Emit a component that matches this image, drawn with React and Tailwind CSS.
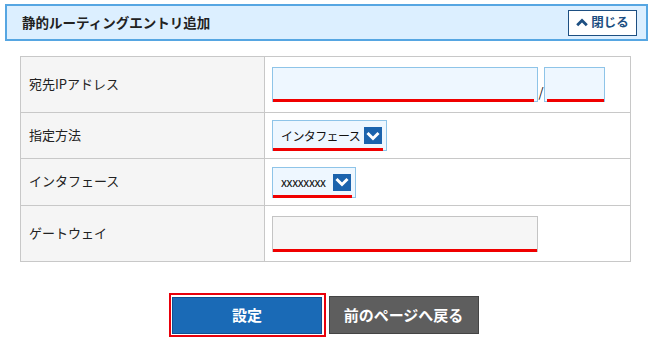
import React from "react";

const font = { fontFamily: '"Noto Sans CJK JP", "Noto Sans", sans-serif' };

function DropIcon() {
  return (
    <span className="flex h-[17px] w-[18px] shrink-0 items-center justify-center bg-[#1b63ad]">
      <svg width="14" height="10" viewBox="0 0 14 10">
        <path d="M1.5 2 L7 7.5 L12.5 2" fill="none" stroke="#fff" strokeWidth="3" strokeLinejoin="miter" />
      </svg>
    </span>
  );
}

function Select({ label, w, track }) {
  return (
    <div className={`relative flex h-[31px] ${w} items-center justify-between border border-[#8ec4e8] bg-[#eef7ff] pl-[8px] pr-[4px]`}>
      <span className={`whitespace-nowrap text-[12px] leading-none text-[#111] ${track}`}>{label}</span>
      <DropIcon />
      <span className="absolute bottom-[-1px] left-0 right-[3px] h-[3px] bg-[#f00000]" />
    </div>
  );
}

function Row({ label, children, h, last }) {
  return (
    <div className={`flex ${h} ${last ? "" : "border-b border-[#c8c8c8]"}`}>
      <div className="flex w-[244px] shrink-0 items-center border-r border-[#c8c8c8] bg-[#f5f5f5] pb-[2px] pl-[8px] text-[13px] text-[#222]">
        {label}
      </div>
      <div className="flex flex-1 items-center bg-white pl-[7px]">{children}</div>
    </div>
  );
}

export default function App() {
  return (
    <div className="h-[348px] w-[652px] bg-white" style={font}>
      <div className="pl-[5px] pr-[4px] pt-[4px]">
        <div className="flex h-[37px] items-center justify-between border-2 border-[#56a6e2] bg-[#dcefff] pl-[15px] pr-[9px]">
          <span className="text-[13.5px] font-bold text-[#222]">静的ルーティングエントリ追加</span>
          <button className="flex h-[26px] w-[69px] items-center justify-center gap-[3px] border-[1.5px] border-[#1d4f82] bg-white text-[12.5px] font-bold text-[#1d4f82]">
            <svg width="12" height="9" viewBox="0 0 12 9">
              <path d="M1.2 7.3 L6 2.5 L10.8 7.3" fill="none" stroke="#1d4f82" strokeWidth="2.8" />
            </svg>
            閉じる
          </button>
        </div>
      </div>

      <div className="ml-[20px] mt-[15px] w-[611px] border border-[#c8c8c8]">
        <Row label="宛先IPアドレス" h="h-[56px]">
          <div className="flex items-end">
            <div className="relative h-[35px] w-[266px] border border-[#8ec4e8] bg-[#eef7ff]">
              <span className="absolute bottom-[-1px] left-0 right-[3px] h-[3px] bg-[#f00000]" />
            </div>
            <span className="mb-[4px] flex w-[6px] justify-center text-[13px] leading-none text-[#111]">/</span>
            <div className="relative h-[35px] w-[61px] border border-[#8ec4e8] bg-[#eef7ff]">
              <span className="absolute bottom-[-1px] left-[2px] right-0 h-[3px] bg-[#f00000]" />
            </div>
          </div>
        </Row>
        <Row label="指定方法" h="h-[46px]">
          <Select label="インタフェース" w="w-[115px]" track="tracking-[-0.6px]" />
        </Row>
        <Row label="インタフェース" h="h-[47px]">
          <Select label="xxxxxxxx" w="w-[84px]" track="tracking-[-0.4px]" />
        </Row>
        <Row label="ゲートウェイ" h="h-[55px]" last>
          <div className="relative h-[36px] w-[266px] border border-[#c4c4c4] bg-[#f6f6f6]">
            <span className="absolute bottom-[-1px] left-0 right-0 h-[3px] bg-[#f00000]" />
          </div>
        </Row>
      </div>

      <div className="mt-[31px] flex items-center justify-center gap-[3px] pr-[5px]">
        <div className="border-2 border-[#e8000b] p-[1.5px]">
          <button className="flex h-[37px] w-[150px] items-center justify-center border border-[#0f4f91] bg-[#1a6ab6] text-[15px] font-bold text-white">
            設定
          </button>
        </div>
        <button className="flex h-[38px] w-[150px] items-center justify-center border border-[#444] bg-[#5e5e5e] text-[15px] font-bold text-white">
          前のページへ戻る
        </button>
      </div>
    </div>
  );
}
